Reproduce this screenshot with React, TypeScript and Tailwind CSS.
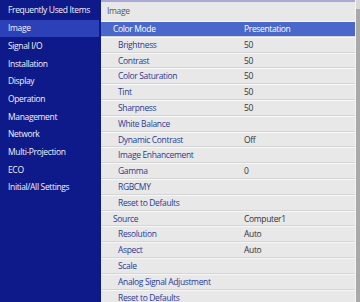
const menu = [
  "Frequently Used Items",
  "Image",
  "Signal I/O",
  "Installation",
  "Display",
  "Operation",
  "Management",
  "Network",
  "Multi-Projection",
  "ECO",
  "Initial/All Settings",
];

type Row = { label: string; value?: string; sub?: boolean; active?: boolean };

const rows: Row[] = [
  { label: "Color Mode", value: "Presentation", active: true },
  { label: "Brightness", value: "50", sub: true },
  { label: "Contrast", value: "50", sub: true },
  { label: "Color Saturation", value: "50", sub: true },
  { label: "Tint", value: "50", sub: true },
  { label: "Sharpness", value: "50", sub: true },
  { label: "White Balance", sub: true },
  { label: "Dynamic Contrast", value: "Off", sub: true },
  { label: "Image Enhancement", sub: true },
  { label: "Gamma", value: "0", sub: true },
  { label: "RGBCMY", sub: true },
  { label: "Reset to Defaults", sub: true },
  { label: "Source", value: "Computer1" },
  { label: "Resolution", value: "Auto", sub: true },
  { label: "Aspect", value: "Auto", sub: true },
  { label: "Scale", sub: true },
  { label: "Analog Signal Adjustment", sub: true },
  { label: "Reset to Defaults", sub: true },
];

export default function App() {
  return (
    <div
      className="flex h-[302px] w-[360px] overflow-hidden whitespace-nowrap bg-[#0f1a8a] text-[8.5px] font-medium tracking-[-0.35px]"
      style={{ fontFamily: '"Open Sans", sans-serif' }}
    >
      {/* left menu */}
      <div className="flex w-[101px] shrink-0 flex-col pt-[2px]">
        {menu.map((m) => (
          <div
            key={m}
            className={`mr-[2px] flex h-[17.7px] items-center pl-[8px] text-[#f2f2fa] ${
              m === "Image" ? "bg-[#2c40b8]" : ""
            }`}
          >
            {m}
          </div>
        ))}
      </div>

      {/* right panel */}
      <div className="flex flex-1 bg-[#f4f4f4]">
        <div className="flex flex-1 flex-col">
          <div className="flex h-[21px] shrink-0 items-center border-t-2 border-[#aaa8d4] bg-[#e8e8e8] pl-[6px] font-normal text-[#555]">
            Image
          </div>
          {rows.map((r, i) => (
            <div
              key={i}
              className={`flex h-[15.8px] shrink-0 items-center border-t border-b border-t-[#f7f7f7] border-b-[#d4d4d4] pt-[1px] ${
                r.active ? "bg-[#4a67cb] text-white" : "bg-[#e8e8e8] text-[#2a3a94]"
              }`}
            >
              <div className={`w-[143px] ${r.sub ? "pl-[17px]" : "pl-[12px]"}`}>{r.label}</div>
              <div className={r.active ? "text-white" : "text-[#333]"}>{r.value}</div>
            </div>
          ))}
        </div>
        <div className="ml-[1px] flex w-[4px] flex-col bg-[#d8d8d8]">
          <div className="mt-[9px] flex-1 bg-[#a9a9a9]" />
        </div>
      </div>
    </div>
  );
}
